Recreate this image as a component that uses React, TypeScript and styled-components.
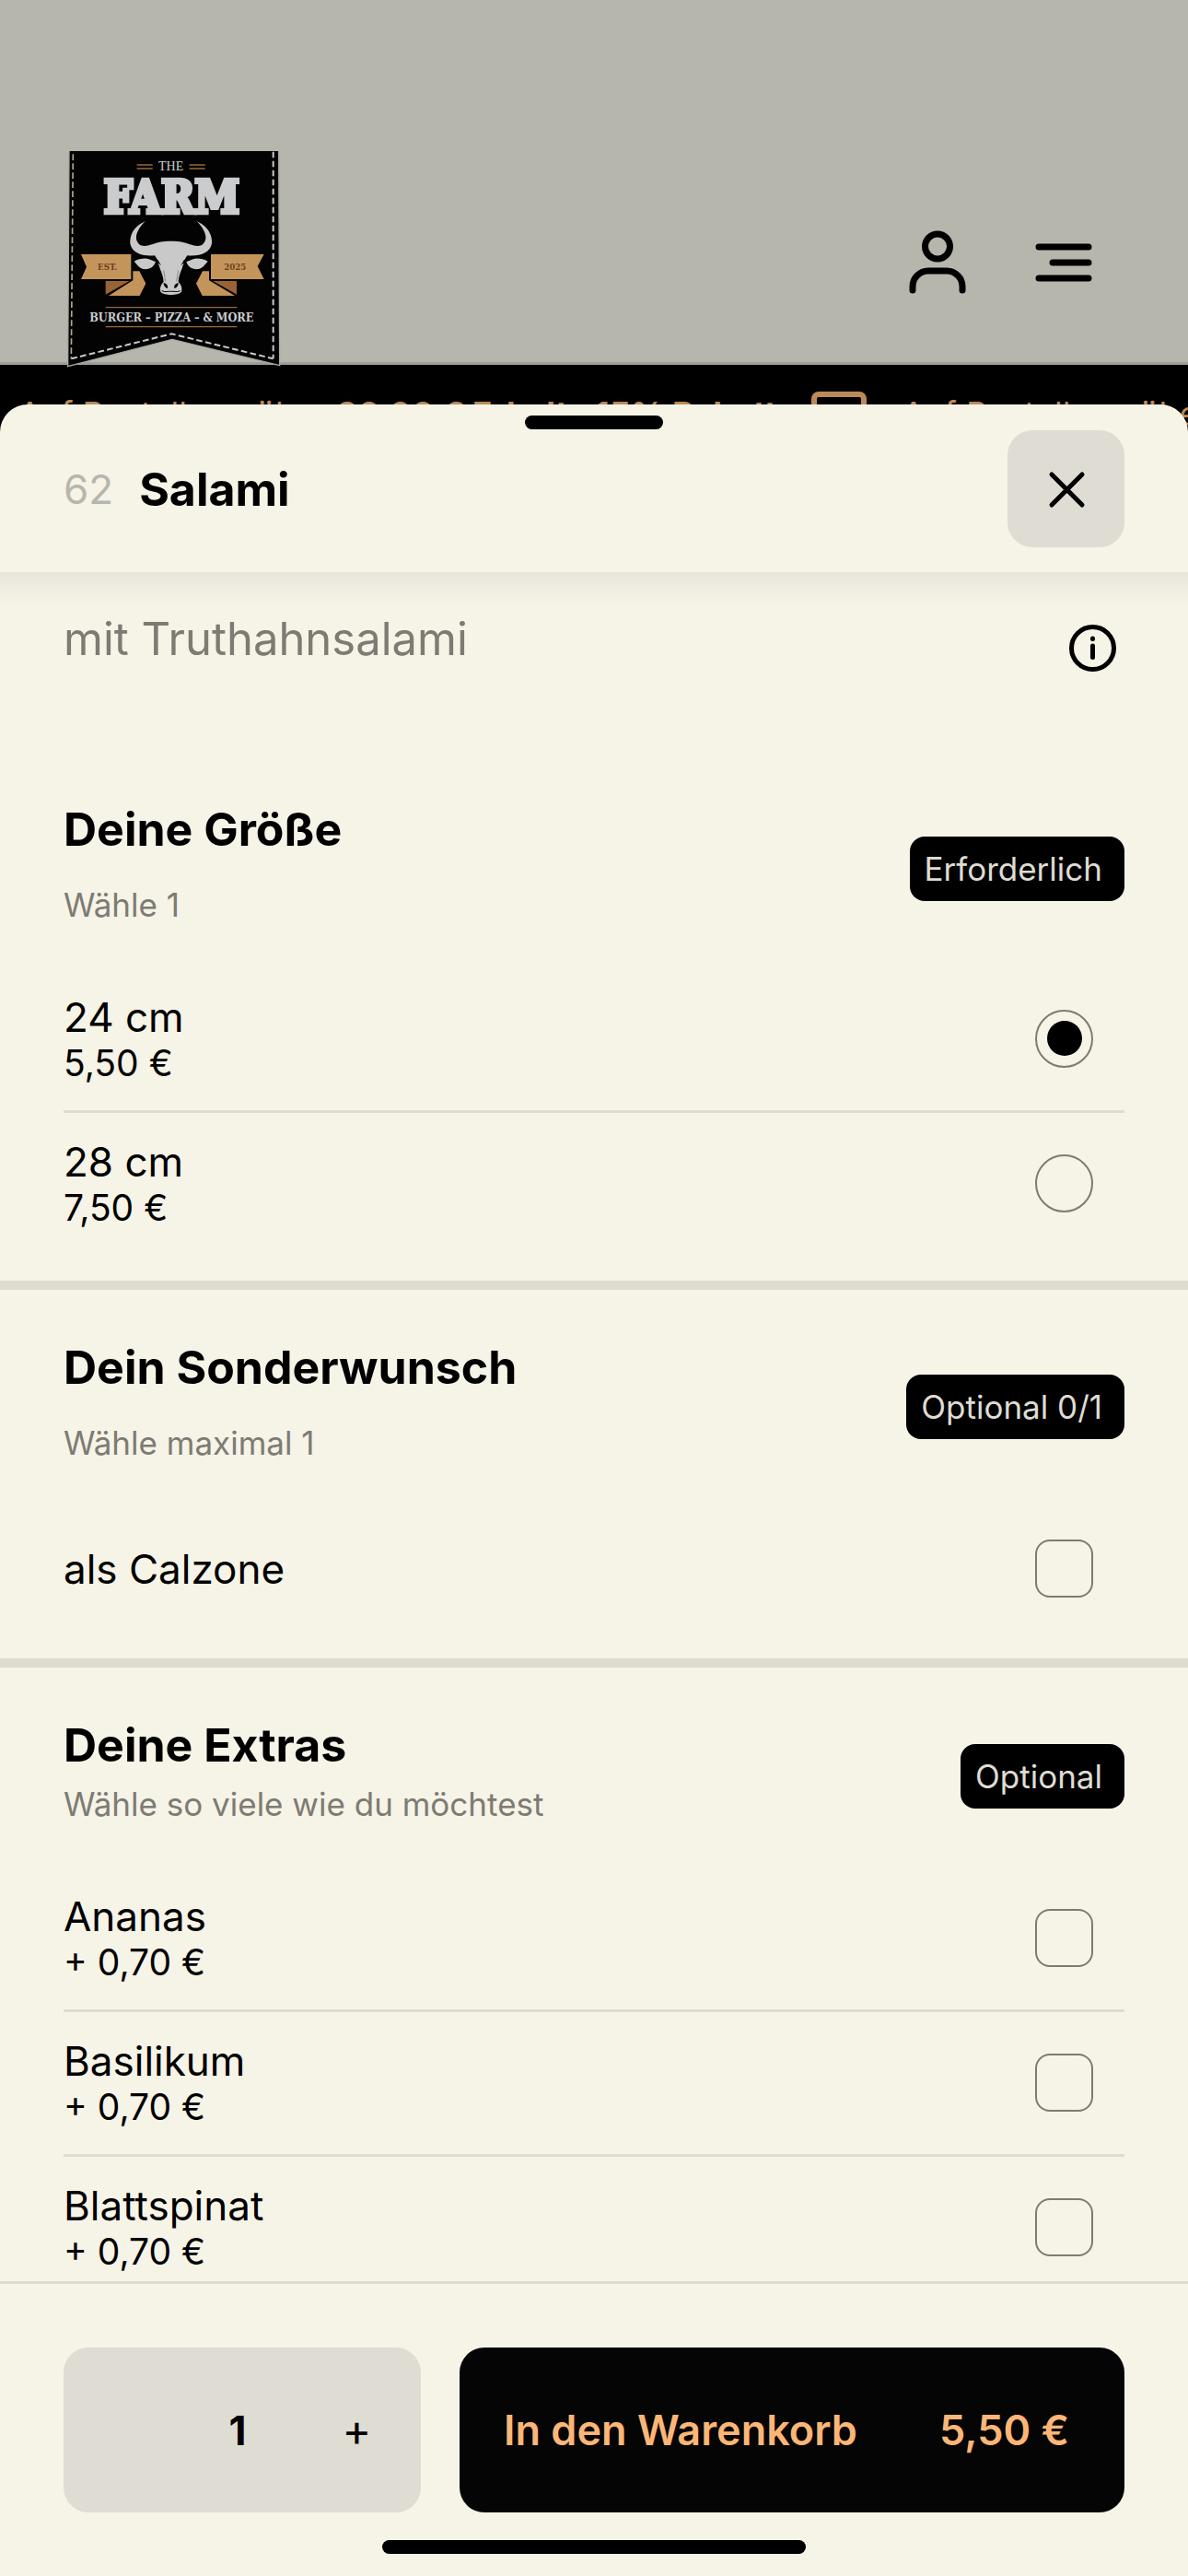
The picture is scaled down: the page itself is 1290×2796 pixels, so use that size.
import React, { useState } from 'react'
import styled, { createGlobalStyle } from 'styled-components'

const GlobalStyle = createGlobalStyle`
  * {
    box-sizing: border-box;
  }

  body {
    margin: 0;
    background: #b7b6ad;
    color: #000;
    font-family: Inter, "Liberation Sans", sans-serif;
  }

  button {
    font-family: inherit;
    color: inherit;
    border: none;
    padding: 0;
    cursor: pointer;
  }

  h1, h2, p {
    margin: 0;
  }
`

const Page = styled.div`
  display: flex;
  flex-direction: column;
  height: 100vh;
  overflow: hidden;
`

const Header = styled.header`
  position: relative;
  z-index: 1;
  display: flex;
  justify-content: space-between;
  padding: 164px 104px 0 73px;
  border-bottom: 3px solid #9f9e96;
`

const LogoLink = styled.a`
  margin-bottom: -6px;

  svg {
    display: block;
  }
`

const HeaderNav = styled.nav`
  display: flex;
  align-items: center;
  gap: 75px;
  padding-top: 12px;
`

const IconButton = styled.button`
  display: flex;
  align-items: center;
  justify-content: center;
  background: transparent;
`

const Marquee = styled.div`
  display: flex;
  align-items: flex-start;
  gap: 38px;
  height: 78px;
  padding: 29px 0 0 20px;
  overflow: hidden;
  background: #000;
  color: #bb8a58;
  font-size: 36px;
  line-height: 48px;
  white-space: nowrap;

  svg {
    flex: none;
  }
`

const Sheet = styled.section`
  position: relative;
  z-index: 2;
  display: flex;
  flex: 1;
  flex-direction: column;
  min-height: 0;
  margin-top: -35px;
  border-radius: 30px 30px 0 0;
  background: #f6f3e7;
`

const Handle = styled.span`
  position: absolute;
  top: 12px;
  left: 50%;
  width: 150px;
  height: 15px;
  border-radius: 8px;
  background: #000;
  transform: translateX(-50%);
`

const SheetHeader = styled.div`
  display: flex;
  align-items: center;
  gap: 28px;
  padding: 28px 69px 27px;
`

const ItemNumber = styled.span`
  color: #b7b6ad;
  font-size: 44px;
  line-height: 60px;
`

const ItemName = styled.h1`
  flex: 1;
  font-size: 50px;
  font-weight: 700;
  line-height: 60px;
`

const CloseButton = styled(IconButton)`
  width: 127px;
  height: 127px;
  border-radius: 27px;
  background: #dedcd3;
`

const Content = styled.div`
  flex: 1;
  min-height: 0;
  overflow: hidden;
  background: linear-gradient(#e8e6db, #f6f3e7 36px);
`

const Description = styled.div`
  display: flex;
  align-items: flex-start;
  justify-content: space-between;
  padding: 43px 69px 74px;
  color: #7d7b73;
  font-size: 49px;
  line-height: 60px;
`

const InfoButton = styled(IconButton)`
  width: 69px;
  height: 78px;
  color: #000;
`

const Group = styled.section`
  padding: 54px 69px 28px;

  & + & {
    border-top: 10px solid #dedcd0;
  }
`

const GroupHeader = styled.div`
  display: flex;
  align-items: center;
  justify-content: space-between;
  margin-bottom: 35px;
`

const GroupTitle = styled.h2<{ $spaced: boolean }>`
  margin-bottom: ${({ $spaced }) => ($spaced ? '18px' : '0')};
  font-size: 50px;
  font-weight: 700;
  line-height: 60px;
`

const GroupHint = styled.p`
  color: #7d7b73;
  font-size: 35px;
  line-height: 68px;
`

const Badge = styled.span`
  padding: 11px 24px 11px 16px;
  border-radius: 16px;
  background: #000;
  color: #dedcd3;
  font-size: 35px;
  line-height: 48px;
`

const OptionRow = styled.label`
  display: flex;
  align-items: center;
  justify-content: space-between;
  min-height: 137px;
  padding: 26px 34px 28px 0;
  cursor: pointer;

  & + & {
    border-top: 3px solid #dedcd0;
  }
`

const OptionName = styled.span`
  display: block;
  font-size: 44px;
  line-height: 54px;
`

const OptionPrice = styled.span`
  display: block;
  font-size: 39px;
  line-height: 46px;
`

const OptionInput = styled.input`
  display: grid;
  place-items: center;
  width: 63px;
  height: 63px;
  margin: 0;
  border: 2px solid #7d7b73;
  border-radius: ${({ type }) => (type === 'radio' ? '50%' : '16px')};
  appearance: none;
  cursor: pointer;

  &:checked::before {
    content: '';
    width: 38px;
    height: 38px;
    border-radius: ${({ type }) => (type === 'radio' ? '50%' : '8px')};
    background: #000;
  }
`

const Footer = styled.footer`
  border-top: 3px solid #dedcd0;
  padding: 69px 69px 24px;
`

const FooterActions = styled.div`
  display: grid;
  grid-template-columns: 388fr 722fr;
  gap: 42px;
`

const Stepper = styled.div`
  display: grid;
  grid-template-columns: 13fr 12fr 14fr;
  align-items: stretch;
  height: 179px;
  border-radius: 27px;
  background: #dedcd3;
`

const StepButton = styled.button`
  grid-column: ${({ value }) => (value === 'plus' ? 3 : 1)};
  background: transparent;
  font-size: 48px;
`

const Quantity = styled.output`
  grid-column: 2;
  align-self: center;
  font-size: 44px;
  font-weight: 700;
  line-height: 54px;
  text-align: center;
`

const CartButton = styled.button`
  display: flex;
  align-items: center;
  justify-content: space-between;
  padding: 0 60px 0 48px;
  border-radius: 27px;
  background: #050505;

  span {
    color: #fbb677;
    font-size: 45px;
    font-weight: 600;
    line-height: 54px;
  }
`

const HomeIndicator = styled.div`
  width: 40%;
  max-width: 462px;
  height: 15px;
  margin: 30px auto 0;
  border-radius: 8px;
  background: #000;
`

interface Option {
  id: string
  name: string
  price?: number
}

interface OptionGroup {
  id: string
  title: string
  hint: string
  type: 'radio' | 'checkbox'
  required?: boolean
  max?: number
  options: Option[]
}

const groups: OptionGroup[] = [
  {
    id: 'size',
    title: 'Deine Größe',
    hint: 'Wähle 1',
    type: 'radio',
    required: true,
    max: 1,
    options: [
      { id: 's24', name: '24 cm', price: 5.5 },
      { id: 's28', name: '28 cm', price: 7.5 }
    ]
  },
  {
    id: 'wish',
    title: 'Dein Sonderwunsch',
    hint: 'Wähle maximal 1',
    type: 'checkbox',
    max: 1,
    options: [{ id: 'calzone', name: 'als Calzone' }]
  },
  {
    id: 'extras',
    title: 'Deine Extras',
    hint: 'Wähle so viele wie du möchtest',
    type: 'checkbox',
    options: [
      { id: 'ananas', name: 'Ananas', price: 0.7 },
      { id: 'basilikum', name: 'Basilikum', price: 0.7 },
      { id: 'blattspinat', name: 'Blattspinat', price: 0.7 }
    ]
  }
]

const formatPrice = (value: number) => `${value.toFixed(2).replace('.', ',')} €`

const Logo = () => (
  <svg width='232' height='235' viewBox='40 42 696 705' role='img' aria-label='The Farm'>
    <path d='M46 42H729L732 740L382 655L42 743Z' fill='#030304' />
    <path d='M46 42L42 743L382 655L732 740L729 42' fill='none' stroke='#a9a9a6' strokeWidth='4' />
    <g fill='none' stroke='#c9c9c7' strokeWidth='6' strokeDasharray='20 10'>
      <path d='M59 52L53 718' stroke='#b5a590' strokeWidth='5' />
      <path d='M711 44V718' />
      <path d='M53 718L380 637L711 718' />
    </g>
    <g stroke='#96683d' strokeWidth='4'>
      <path d='M267 87H318M267 99H318M438 87H489M438 99H489' />
      <path d='M165 551H593M165 614H593' />
    </g>
    <g fill='#cbcccd' textAnchor='middle' fontFamily='"DejaVu Serif Condensed", "DejaVu Serif", serif' fontWeight='bold'>
      <text x='378' y='106' fontSize='42' fontFamily='"Liberation Serif", serif' fontWeight='normal'>THE</text>
      <text x='380' y='243' fontSize='146' stroke='#cbcccd' strokeWidth='13'>FARM</text>
      <text x='380' y='598' fontSize='38'>BURGER – PIZZA – &amp; MORE</text>
    </g>
    <g fill='#c4955b'>
      <path d='M85 378H248V459H85L103 419Z' />
      <path d='M508 378H681L660 417L681 459H508Z' />
      <path d='M175 513L254 463V433H275L296 473L276 513Z' />
      <path d='M586 513L502 463V433H481L460 473L480 513Z' />
    </g>
    <path d='M165 465H243L165 509ZM592 465H514L592 509Z' fill='#996335' />
    <g fill='#6b401d' textAnchor='middle' fontFamily='"DejaVu Serif", serif' fontWeight='bold' fontSize='26'>
      <text x='171' y='429'>EST.</text>
      <text x='587' y='429'>2025</text>
    </g>
    <g fill='#c9c9ca'>
      <path d='M295 270C262 285 243 310 245 343C251 374 285 386 325 382L334 396C338 424 352 438 354 468C342 478 342 492 344 500C354 513 402 513 412 500C414 492 414 478 402 468C404 438 418 424 422 396L431 382C471 386 505 374 511 343C513 310 494 285 461 270C487 294 502 326 482 345C464 360 436 341 414 338C394 334 362 334 342 338C320 341 292 360 274 345C254 326 269 294 295 270Z' />
      <path d='M258 401C276 389 310 389 329 398C325 417 309 429 288 426C274 423 267 410 258 401Z' />
      <path d='M498 401C480 389 446 389 427 398C431 417 447 429 468 426C482 423 489 410 498 401Z' />
    </g>
    <g fill='#030304'>
      <path d='M294 384L336 397L346 415L333 404L296 390ZM462 384L420 397L410 415L423 404L460 390Z' />
      <path d='M326 408L340 416C340 434 350 444 352 466C340 448 328 430 326 408ZM430 408L416 416C416 434 406 444 404 466C416 448 428 430 430 408Z' />
      <path d='M354 472C363 472 369 480 367 489C358 487 354 480 354 472ZM402 472C393 472 387 480 389 489C398 487 402 480 402 472Z' />
    </g>
    <path d='M348 497C362 503 368 497 378 499C388 497 394 503 408 497' fill='none' stroke='#030304' strokeWidth='3' />
    <path d='M354 430L360 466M402 430L396 466' fill='none' stroke='#68686c' strokeWidth='2' />
  </svg>
)

const UserIcon = () => (
  <svg width='62' height='69' viewBox='0 0 62 69' fill='none' stroke='#000' strokeWidth='7' strokeLinecap='round'>
    <circle cx='31' cy='17.5' r='13.5' />
    <path d='M4 65v-4a17 17 0 0 1 17-17h20a17 17 0 0 1 17 17v4' />
  </svg>
)

const MenuIcon = () => (
  <svg width='62' height='42' viewBox='0 0 62 42' stroke='#000' strokeWidth='7' strokeLinecap='round'>
    <path d='M4 4H58M19 21H58M4 38H58' />
  </svg>
)

const CloseIcon = () => (
  <svg width='42' height='42' viewBox='0 0 42 42' stroke='#000' strokeWidth='5' strokeLinecap='round'>
    <path d='M5 5L38 38M38 5L5 38' />
  </svg>
)

const InfoIcon = () => (
  <svg width='51' height='51' viewBox='0 0 51 51' fill='none' stroke='#000' strokeWidth='5' strokeLinecap='round'>
    <circle cx='25.5' cy='25.5' r='23' />
    <path d='M25.5 23V35.5M25.5 15V15.4' />
  </svg>
)

const DealIcon = () => (
  <svg width='60' height='60' viewBox='0 0 60 60' fill='none' stroke='#bb8a58' strokeWidth='6'>
    <rect x='3' y='3' width='54' height='54' rx='5' />
    <path d='M30 14V44M16 30H44' />
  </svg>
)

const Promo = () => (
  <span>Auf Bestellung über <b>20,00 € Erhalte 15% Rabatt</b></span>
)

const App = () => {
  const [quantity, setQuantity] = useState(1)
  const [selected, setSelected] = useState<string[]>(['s24'])

  const toggle = (group: OptionGroup, id: string) => {
    const others = group.options.map(option => option.id)
    if (group.type === 'radio') {
      setSelected([...selected.filter(item => !others.includes(item)), id])
    } else if (selected.includes(id)) {
      setSelected(selected.filter(item => item !== id))
    } else {
      setSelected([...selected, id])
    }
  }

  const badgeText = (group: OptionGroup) => {
    if (group.required) return 'Erforderlich'
    if (!group.max) return 'Optional'
    const count = group.options.filter(option => selected.includes(option.id)).length
    return `Optional ${count}/${group.max}`
  }

  const total = groups
    .flatMap(group => group.options)
    .filter(option => selected.includes(option.id))
    .reduce((sum, option) => sum + (option.price || 0), 0) * quantity

  return (
    <>
      <GlobalStyle />
      <Page>
        <Header>
          <LogoLink href='#'><Logo /></LogoLink>
          <HeaderNav>
            <IconButton type='button' aria-label='Konto'><UserIcon /></IconButton>
            <IconButton type='button' aria-label='Menü'><MenuIcon /></IconButton>
          </HeaderNav>
        </Header>
        <Marquee>
          <Promo />
          <DealIcon />
          <Promo />
        </Marquee>

        <Sheet>
          <Handle />
          <SheetHeader>
            <ItemNumber>62</ItemNumber>
            <ItemName>Salami</ItemName>
            <CloseButton type='button' aria-label='Schließen'><CloseIcon /></CloseButton>
          </SheetHeader>

          <Content>
            <Description>
              <p>mit Truthahnsalami</p>
              <InfoButton type='button' aria-label='Info'><InfoIcon /></InfoButton>
            </Description>

            {groups.map(group => (
              <Group key={group.id}>
                <GroupHeader>
                  <div>
                    <GroupTitle $spaced={!!group.max}>{group.title}</GroupTitle>
                    <GroupHint>{group.hint}</GroupHint>
                  </div>
                  <Badge>{badgeText(group)}</Badge>
                </GroupHeader>
                {group.options.map(option => (
                  <OptionRow key={option.id} htmlFor={option.id}>
                    <span>
                      <OptionName>{option.name}</OptionName>
                      {option.price && (
                        <OptionPrice>
                          {group.type === 'checkbox' && '+ '}{formatPrice(option.price)}
                        </OptionPrice>
                      )}
                    </span>
                    <OptionInput
                      id={option.id}
                      type={group.type}
                      name={group.id}
                      checked={selected.includes(option.id)}
                      onChange={() => toggle(group, option.id)}
                    />
                  </OptionRow>
                ))}
              </Group>
            ))}
          </Content>

          <Footer>
            <FooterActions>
              <Stepper>
                {quantity > 1 && (
                  <StepButton type='button' value='minus' aria-label='Weniger' onClick={() => setQuantity(quantity - 1)}>−</StepButton>
                )}
                <Quantity>{quantity}</Quantity>
                <StepButton type='button' value='plus' aria-label='Mehr' onClick={() => setQuantity(quantity + 1)}>+</StepButton>
              </Stepper>
              <CartButton type='button'>
                <span>In den Warenkorb</span>
                <span>{formatPrice(total)}</span>
              </CartButton>
            </FooterActions>
            <HomeIndicator />
          </Footer>
        </Sheet>
      </Page>
    </>
  )
}

export default App
